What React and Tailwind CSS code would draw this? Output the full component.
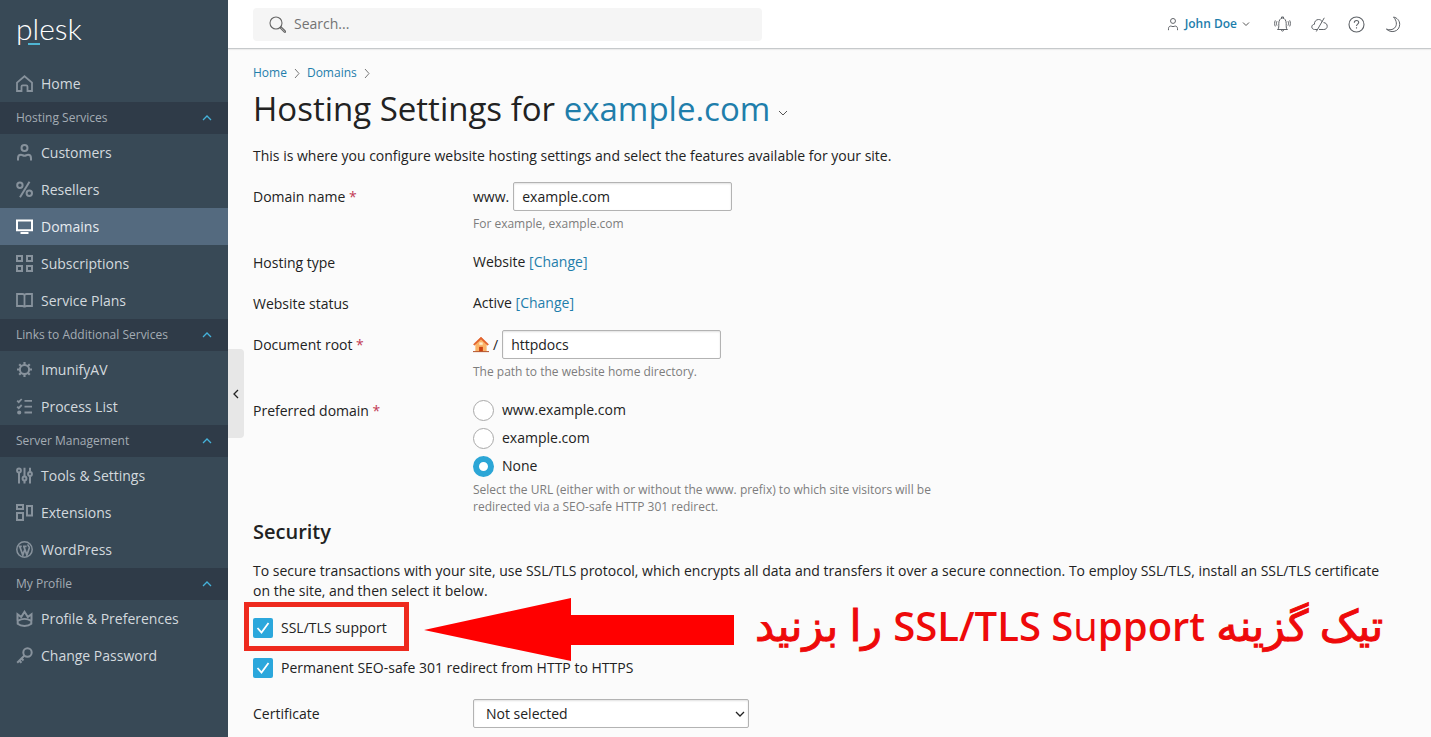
import React from "react";

function Icon({ size = 17, width = 2, className = "", children }) {
  return (
    <svg
      width={size}
      height={size}
      viewBox="0 0 17 17"
      fill="none"
      stroke="currentColor"
      strokeWidth={width}
      className={"shrink-0 " + className}
      aria-hidden="true"
    >
      {children}
    </svg>
  );
}

const icons = {
  home: <path d="M1 7.600 8.500 1.300 16 7.600V16h-4.500v-4.500a1.200 1.200 0 0 0-1.200-1.200H6.700a1.200 1.200 0 0 0-1.200 1.200V16H1Z" strokeWidth="1.800" />,
  customers: (
    <>
      <circle cx="8.500" cy="4" r="3" />
      <path d="M2 16.500v-2.300c0-2 1.300-3.400 3-3.400 1.300 0 2 .9 3.500.9s2.200-.9 3.500-.9c1.700 0 3 1.400 3 3.400v2.300" />
    </>
  ),
  resellers: (
    <>
      <circle cx="3.900" cy="4.300" r="2.700" />
      <circle cx="13.300" cy="12.300" r="2.700" />
      <path d="M13.500.8 4 16.200" />
    </>
  ),
  domains: (
    <>
      <path d="M1 2.500h15v9.800H1Z" strokeWidth="2" />
      <path d="M4.500 15h8" strokeWidth="2" />
    </>
  ),
  subscriptions: <path d="M1 1h5v5H1ZM11 1h5v5h-5ZM1 11h5v5H1ZM11 11h5v5h-5Z" />,
  plans: <path d="M1 2h5.500c1.200 0 2 .6 2 1.600 0-1 .8-1.600 2-1.600H16v12h-5.300c-1.200 0-2.200.4-2.200 1.400 0-1-1-1.400-2.200-1.400H1ZM8.500 3.500V15" strokeWidth="1.800" />,
  imunify: (
    <>
      <circle cx="8.500" cy="8.500" r="4.600" strokeWidth="2" />
      <path d="M8.500 4V1M8.500 16v-3M4 8.500H1M16 8.500h-3M5.300 5.300 3.200 3.200M13.800 13.800l-2.100-2.100M5.300 11.700l-2.100 2.100M13.800 3.200l-2.100 2.100" strokeWidth="2.200" />
    </>
  ),
  process: (
    <>
      <path d="M1.200 2.700l1.500 1.500L5.700 1M1.200 8.600l1.500 1.500L5.700 7M8.500 2.800H16M8.500 8.700H16M8.500 14.500H16" strokeWidth="1.800" />
      <circle cx="3.200" cy="14.500" r="1.100" fill="currentColor" />
    </>
  ),
  tools: (
    <>
      <path d="M3 5.800v10.700M8.500.8v8.500M8.500 13.800v2.700M14 .8v4M14 9.300v7.200" />
      <circle cx="3" cy="3.500" r="1.900" />
      <circle cx="8.500" cy="11.500" r="1.900" />
      <circle cx="14" cy="7" r="1.900" />
    </>
  ),
  extensions: <path d="M1 1h6v4H1ZM1 9h6v7H1ZM11 2h5v9.500h-5Z" />,
  wordpress: (
    <>
      <circle cx="8.500" cy="8.500" r="7.700" strokeWidth="1.500" />
      <path d="M2.600 5.400h3.200M7 5.400h3.600M3.800 5.600l3 8.500 2-5.600M7.900 5.600l3 8.500 2.400-7.100c.3-1.500-1.600-2-1.300-3.600" strokeWidth="1.700" />
    </>
  ),
  crown: (
    <>
      <path d="M1.500 10.600V4.200l3.700 2.900L8.500 1.800l3.300 5.300 3.700-2.900v6.400" />
      <path d="M1.700 10.800c4-2.400 9.600-2.400 13.600 0v3c-3.300 2.800-10.300 2.800-13.600 0Z" />
    </>
  ),
  key: (
    <>
      <circle cx="11.500" cy="5.500" r="4.200" />
      <path d="M8.500 8.500 1.200 15.800M3.200 13.500l2.300 2.300M5.500 11.500l2 2" />
    </>
  ),
};

const sections = [
  {
    title: "Hosting Services",
    items: [
      ["Customers", "customers"],
      ["Resellers", "resellers"],
      ["Domains", "domains"],
      ["Subscriptions", "subscriptions"],
      ["Service Plans", "plans"],
    ],
  },
  {
    title: "Links to Additional Services",
    items: [
      ["ImunifyAV", "imunify"],
      ["Process List", "process"],
    ],
  },
  {
    title: "Server Management",
    items: [
      ["Tools & Settings", "tools"],
      ["Extensions", "extensions"],
      ["WordPress", "wordpress"],
    ],
  },
  {
    title: "My Profile",
    items: [
      ["Profile & Preferences", "crown"],
      ["Change Password", "key"],
    ],
  },
];

function Chevron({ d, w = 8, h = 8, className = "", width = 1 }) {
  return (
    <svg width={w} height={h} viewBox={`0 0 ${w} ${h}`} fill="none" stroke="currentColor" strokeWidth={width} className={"shrink-0 " + className} aria-hidden="true">
      <path d={d} />
    </svg>
  );
}

function NavItem({ label, icon, active }) {
  return (
    <a
      href="#"
      aria-current={active ? "page" : undefined}
      className={
        "flex h-[37px] items-center gap-2 px-4 text-sm " +
        (active ? "bg-[#546a7f] text-[#e6ebef]" : "text-[#d3d9de]")
      }
    >
      <Icon className={active ? "text-white" : "text-[#87929c]"}>{icons[icon]}</Icon>
      {label}
    </a>
  );
}

function Sidebar() {
  return (
    <aside className="relative w-57 shrink-0 bg-[#384956]">
      <div className="h-[65px] px-4 pt-[11px]">
        <a href="#" className="relative inline-block font-[Lato,sans-serif] text-[30px] font-light leading-[34px] text-white">
          plesk
          <span className="absolute left-3 top-8 h-[2px] w-3 bg-[#4fb5d3]" />
        </a>
      </div>
      <nav>
        <NavItem label="Home" icon="home" />
        {sections.map((s) => (
          <div key={s.title}>
            <button type="button" className="flex h-8 w-full items-center justify-between bg-[#2f3b48] px-4 text-xs text-[#a4acb4]">
              {s.title}
              <Chevron d="M1 6 5 2 9 6" w={10} className="text-[#45b2da]" width={1.3} />
            </button>
            {s.items.map(([label, icon]) => (
              <NavItem key={label} label={label} icon={icon} active={label === "Domains"} />
            ))}
          </div>
        ))}
      </nav>
      <button
        type="button"
        aria-label="Collapse sidebar"
        className="absolute left-full top-[349px] flex h-[89px] w-4 items-center justify-center rounded-r bg-[#e7e7e7] text-[#222]"
      >
        <Chevron d="M6 1 2 5 6 9" h={10} width={1.3} />
      </button>
    </aside>
  );
}

function TopBar() {
  return (
    <header className="flex h-[49px] items-center justify-between border-b border-[#c6c9cb] bg-white pl-[25px] pr-[29px] shadow-[0_1px_1px_rgba(0,0,0,0.06)]">
      <label className="flex h-[33px] w-[509px] items-center gap-2 rounded bg-[#f5f5f5] px-4 text-[#737373]">
        <Icon width={1.100} className="text-[#666]">
          <circle cx="7" cy="7" r="6" />
          <path d="M11 11.800 12 10.800 16.300 15a.7.7 0 0 1-1 1.100Z" />
        </Icon>
        <input type="search" aria-label="Search" placeholder="Search..." className="min-w-0 flex-1 bg-transparent text-sm outline-none placeholder:text-[#737373]" />
      </label>
      <div className="flex items-center gap-5 text-[#5f6368]">
        <button type="button" className="mr-1 flex items-center gap-[5px] text-xs font-semibold text-[#1d7dab]">
          <Icon size={14} width={1.200} className="text-[#5f6368]">
            <circle cx="8.500" cy="4.800" r="3" />
            <path d="M3 16v-1.800c0-2 1.200-3.200 2.800-3.200 1.100 0 1.500.7 2.700.7s1.600-.7 2.700-.7c1.600 0 2.800 1.200 2.800 3.200V16" />
          </Icon>
          John Doe
          <Chevron d="M1 2.500 4 5.500 7 2.500" className="text-[#555]" />
        </button>
        <button type="button" aria-label="Notifications">
          <Icon width={1}>
            <path d="M3.300 13.500h10.400M4 13.300c.9-1.200.8-3 .8-6C4.800 4.800 6.200 2 8.500 2s3.700 2.800 3.700 5.300c0 3-.1 4.800.8 6M7.500 2.200V1h2v1.200M7.300 13.700c0 .9.500 1.400 1.200 1.400s1.200-.5 1.200-1.400" />
            <path d="M3 5.200c-.7 1.400-.7 3 0 4.400M1.300 4.400c-.9 1.900-.9 4.100 0 6M14 5.200c.7 1.400.7 3 0 4.400M15.700 4.400c.9 1.900.9 4.100 0 6" />
          </Icon>
        </button>
        <button type="button" aria-label="Cloud status">
          <Icon width={1}>
            <path d="M6 13.500H3.600C2 13.500.8 12.400.8 10.900s1.100-2.500 2.600-2.600C3.300 5.600 5 3.500 7.600 3.500c1.600 0 2.900.8 3.600 2.300M12.500 6.600c2.300.1 3.900 1.700 3.700 3.900-.1 1.800-1.500 3-3.400 3H8M13.300 1.800 5.300 15.500" />
          </Icon>
        </button>
        <button type="button" aria-label="Help">
          <Icon width={1.100}>
            <circle cx="8.500" cy="8.500" r="7.500" />
            <path d="M6.300 6.700c0-1.400.9-2.200 2.200-2.200s2.200.8 2.200 2c0 1.600-2.200 1.700-2.200 3.500M8.500 11.300v1.300" />
          </Icon>
        </button>
        <button type="button" aria-label="Dark mode">
          <Icon width={1}>
            <path d="M8.500 1c3.500 3.900 3.700 8.300 1.200 10.900-2 2-5.100 2.400-8.300 1.200 2.200 2 5 2.900 7.700 2.300 3.400-.7 5.600-3.500 5.600-7.100 0-3.500-2.400-6.500-6.200-7.300Z" />
          </Icon>
        </button>
      </div>
    </header>
  );
}

const inputClass =
  "h-[29px] w-[219px] rounded-xs border border-[#b3b3b3] bg-white px-2 text-sm text-[#222] shadow-[inset_0_1px_2px_rgba(0,0,0,0.12)] outline-none";
const linkClass = "text-[#1f7eab]";

function Field({ label, htmlFor, required, children }) {
  const Label = htmlFor ? "label" : "div";
  return (
    <div className="grid grid-cols-[220px_1fr]">
      <Label htmlFor={htmlFor} className="pt-1 leading-[21px]">
        {label}
        {required && <span className="text-[#c23a54]"> *</span>}
      </Label>
      <div>{children}</div>
    </div>
  );
}

function Hint({ children }) {
  return <p className="mt-1 max-w-[480px] text-xs leading-[17px] text-[#7d7d7d]">{children}</p>;
}

function Radio({ label, checked }) {
  return (
    <label className="flex h-[22px] items-center gap-2">
      <input
        type="radio"
        name="preferred"
        defaultChecked={checked}
        className="size-[21px] appearance-none rounded-full border border-[#a9a9a9] bg-white checked:border-[6px] checked:border-[#2ca6d6]"
      />
      {label}
    </label>
  );
}

function Checkbox({ label }) {
  return (
    <label className="flex h-[22px] items-center gap-2">
      <span className="grid size-5">
        <input type="checkbox" defaultChecked className="col-start-1 row-start-1 size-5 appearance-none rounded-xs bg-[#2ba7dc]" />
        <svg viewBox="0 0 20 20" className="pointer-events-none col-start-1 row-start-1 size-5" fill="none" stroke="#fff" strokeWidth="1.800" aria-hidden="true">
          <path d="M4.500 10 8.500 14.500 15.500 5" />
        </svg>
      </span>
      {label}
    </label>
  );
}

function HouseIcon() {
  return (
    <svg width="16" height="17" viewBox="0 0 17 17" className="shrink-0" aria-hidden="true">
      <path d="M2.500 8 8.500 2.500 14.500 8v8h-12Z" fill="#fbb468" />
      <path d="M8.500.6 16.500 8.300l-1 1-7-6.500-7 6.500-1-1Z" fill="#e2632c" stroke="#e2632c" strokeWidth=".6" />
      <path d="M6.700 6.300h3.600v2.500H6.700Z" fill="#fff0cf" />
      <path d="M6.500 11h4v5h-4Z" fill="#cc3f12" />
      <path d="M0 15.500h17v1.100H0Z" fill="#b5552d" />
    </svg>
  );
}

export default function App() {
  return (
    <div className="flex min-h-screen bg-[#fbfbfb] font-['Open_Sans',sans-serif] text-sm text-[#222]">
      <Sidebar />
      <div className="min-w-0 flex-1">
        <TopBar />
        <main className="px-[25px] pb-2 pt-[15px]">
          <nav className="flex h-[18px] items-center gap-[7px] text-xs text-[#1f7eab]" aria-label="Breadcrumb">
            <a href="#">Home</a>
            <Chevron d="M1 1 5 5.500 1 10" w={6} h={11} className="text-[#777]" />
            <a href="#">Domains</a>
            <Chevron d="M1 1 5 5.500 1 10" w={6} h={11} className="text-[#777]" />
          </nav>
          <h1 className="mt-[5px] flex items-center gap-2 text-[33px] leading-[44px]">
            <span>
              Hosting Settings for <a href="#" className={linkClass}>example.com</a>
            </span>
            <button type="button" aria-label="Switch domain" className="pt-2 text-[#555]">
              <Chevron d="M1 2 5 6 9 2" w={10} />
            </button>
          </h1>
          <p className="mt-[15px] leading-5">This is where you configure website hosting settings and select the features available for your site.</p>

          <form className="mt-4">
            <div className="flex flex-col gap-4">
              <Field label="Domain name" htmlFor="domain" required>
                <div className="flex items-center gap-1">
                  www.
                  <input id="domain" defaultValue="example.com" className={inputClass} />
                </div>
                <Hint>For example, example.com</Hint>
              </Field>
              <Field label="Hosting type">
                <p className="pt-[3px] leading-[22px]">Website <a href="#" className={linkClass}>[Change]</a></p>
              </Field>
              <Field label="Website status">
                <p className="pt-[3px] leading-[22px]">Active <a href="#" className={linkClass}>[Change]</a></p>
              </Field>
              <Field label="Document root" htmlFor="root" required>
                <div className="flex items-center gap-1">
                  <HouseIcon />
                  /
                  <input id="root" defaultValue="httpdocs" className={inputClass} />
                </div>
                <Hint>The path to the website home directory.</Hint>
              </Field>
              <Field label="Preferred domain" required>
                <div className="flex flex-col gap-1.5 pt-[3px]" role="radiogroup" aria-label="Preferred domain">
                  <Radio label="www.example.com" />
                  <Radio label="example.com" />
                  <Radio label="None" checked />
                </div>
                <Hint>
                  Select the URL (either with or without the www. prefix) to which site visitors will be redirected via a SEO-safe HTTP 301 redirect.
                </Hint>
              </Field>
            </div>

            <h2 className="mt-1 text-xl font-semibold leading-[26px]">Security</h2>
            <p className="mt-4 pr-4 leading-5">
              To secure transactions with your site, use SSL/TLS protocol, which encrypts all data and transfers it over a secure connection. To employ SSL/TLS, install an SSL/TLS certificate on the site, and then select it below.
            </p>

            <div className="relative mt-4">
              <Checkbox label="SSL/TLS support" />
              <div className="pointer-events-none absolute -left-[9px] -top-[15px] h-[49px] w-[165px] border-5 border-[#ee2a1e]" />
              <svg width="310" height="64" viewBox="0 0 310 64" className="pointer-events-none absolute -top-5 left-[171px]" aria-hidden="true">
                <path d="M0 33 147 1v17h163v30H147v16Z" fill="#f00" />
              </svg>
              <p dir="rtl" className="absolute -top-5 left-[502px] whitespace-nowrap font-['Open_Sans','DejaVu_Sans',sans-serif] text-[43px] leading-[56px] text-[#ee0a0a] [-webkit-text-stroke:1px_#ee0a0a]">
                تیک گزینه <bdi className="text-[40px] font-semibold [-webkit-text-stroke:0px]">SSL/TLS S<span className="font-normal">u</span>pport</bdi> را بزنید
              </p>
            </div>
            <div className="mt-[18px]">
              <Checkbox label="Permanent SEO-safe 301 redirect from HTTP to HTTPS" />
            </div>

            <div className="mt-5 grid grid-cols-[220px_1fr]">
              <label htmlFor="certificate" className="pt-1 leading-[21px]">Certificate</label>
              <div className="grid w-[276px]">
                <select
                  id="certificate"
                  className="col-start-1 row-start-1 h-[29px] appearance-none rounded-xs border border-[#b3b3b3] bg-white px-3 text-sm text-[#222] shadow-[inset_0_1px_2px_rgba(0,0,0,0.12)] outline-none"
                >
                  <option>Not selected</option>
                </select>
                <Chevron d="M1 2 5 6 9 2" w={10} className="pointer-events-none col-start-1 row-start-1 mr-1 self-center justify-self-end" width={1.300} />
              </div>
            </div>
          </form>
        </main>
      </div>
    </div>
  );
}
